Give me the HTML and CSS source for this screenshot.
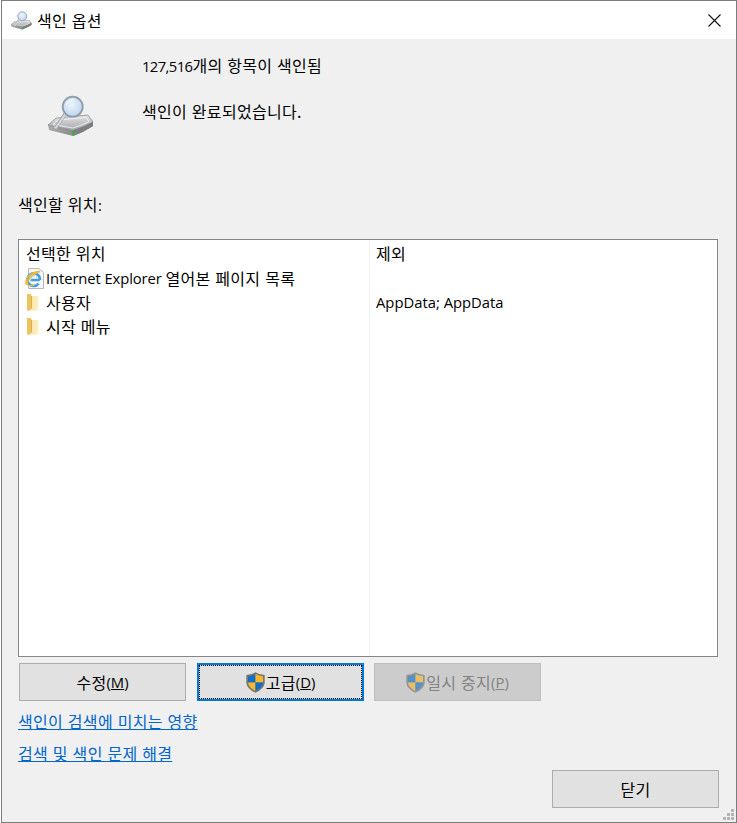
FILE: index.html
```html
<!DOCTYPE html>
<html lang="ko">
<head>
<meta charset="utf-8">
<title>색인 옵션</title>
<link rel="stylesheet" href="styles.css">
</head>
<body>
<svg class="defs" width="0" height="0" aria-hidden="true">
  <defs>
    <linearGradient id="body" x1="0" y1="0" x2="0" y2="1"><stop offset="0" stop-color="#e2e4e6"/><stop offset="1" stop-color="#a2a4a7"/></linearGradient>
    <linearGradient id="side" x1="0" y1="0" x2="1" y2="0"><stop offset="0" stop-color="#a9abad"/><stop offset="1" stop-color="#6f7173"/></linearGradient>
    <radialGradient id="lens" cx=".45" cy=".4" r=".7"><stop offset="0" stop-color="#eef5fc"/><stop offset="1" stop-color="#b4cfec"/></radialGradient>
    <linearGradient id="fold" x1="0" y1="0" x2="1" y2="0"><stop offset="0" stop-color="#f8df94"/><stop offset="1" stop-color="#fdf1c6"/></linearGradient>
    <symbol id="drive" viewBox="0 0 46 42">
      <path d="M0 30 L8 23 L40 20 L45 27 V31 Q36 37 25 41 L1 35Z" fill="url(#side)"/>
      <path d="M0 30 L8 23 L40 20 L45 27 Q36 32 25 35.5Z" fill="url(#body)" stroke="#8a8c8f" stroke-width=".6"/>
      <path d="M25 35.5 Q36 32 45 27 V31 Q36 37 25 41Z" fill="#7d7f82"/>
      <path d="M5 29.5 L10 25 L38 22.5 L41 26.5 Q33 30.5 25 33Z" fill="none" stroke="#f4f5f6" stroke-width=".8"/>
      <rect x="24" y="35.8" width="2" height="4.6" fill="#2ebc2a"/>
      <path d="M8 32 L17 19" stroke="#d6d8da" stroke-width="3.4" stroke-linecap="round"/>
      <path d="M7.2 31.2 L16.2 18.2" stroke="#7f8285" stroke-width=".7" stroke-linecap="round"/>
      <path d="M9.4 33 L18.4 20" stroke="#8f9295" stroke-width=".5" stroke-linecap="round"/>
      <circle cx="24.7" cy="11.7" r="10" fill="url(#lens)" stroke="#8f9caa" stroke-width="1.8"/>
      <path d="M18 10 Q20 5 27 4.5" fill="none" stroke="#fff" stroke-width="1.1" opacity=".85"/>
    </symbol>
    <symbol id="folder" viewBox="0 0 12 18">
      <path d="M0 1 H4 L5 3 H11.5 V17.5 H1 Q0 17.5 0 16.5Z" fill="url(#fold)"/>
      <path d="M0 1 H4 V15 L1.2 17.5 Q0 17.5 0 16.5Z" fill="#ecc55f"/>
      <path d="M4 3 H5 V15 L2 17.5 H1.2 L4 15Z" fill="#d9b04f"/>
    </symbol>
    <symbol id="shield" viewBox="0 0 19 21">
      <path d="M9.5 .3 Q13.5 3 18.7 3 V11 Q18 17 9.5 20.7 Q1 17 .3 11 V3 Q5.5 3 9.5 .3Z" fill="#77776f"/>
      <path d="M9.5 2 V10.5 H2 V4.2 Q6.5 4 9.5 2Z" fill="#0f6fc6"/>
      <path d="M9.5 2 Q12.5 4 17 4.2 V10.5 H9.5Z" fill="#fbb72d"/>
      <path d="M2 10.5 H9.5 V19 Q2.6 16 2 10.5Z" fill="#fbb72d"/>
      <path d="M9.5 10.5 H17 Q16.4 16 9.5 19Z" fill="#0f6fc6"/>
    </symbol>
  </defs>
</svg>
<div class="window">
  <header class="titlebar">
    <svg class="title-icon" width="21" height="19"><use href="#drive"/></svg>
    <span class="title-text ko">색인 옵션</span>
    <svg class="close-x" width="13" height="13" viewBox="0 0 13 13"><path d="M.5 .5 L12.5 12.5 M12.5 .5 L.5 12.5" stroke="#111" stroke-width="1.1" fill="none"/></svg>
  </header>
  <main class="content">
    <section class="status">
      <div class="status-icon"><svg width="46" height="42"><use href="#drive"/></svg></div>
      <div class="status-text">
        <p class="count"><span class="num">127,516</span><span class="ko">개의 항목이 색인됨</span></p>
        <p class="state ko">색인이 완료되었습니다.</p>
      </div>
    </section>
    <p class="list-label"><span class="ko">색인할 위치</span>:</p>
    <div class="listbox">
      <div class="col col-left">
        <div class="col-head"><span class="ko">선택한 위치</span></div>
        <div class="row ie">
          <svg class="ie-icon" width="19" height="21" viewBox="0 0 19 21">
            <path d="M3.5 .5 H14 L18.5 4.5 V20.5 H3.5Z" fill="#f6f6f6" stroke="#b5b8bc"/>
            <path d="M14.8 12 H5.5 M15 12 A6.3 6.3 0 1 0 13.6 15.6" fill="none" stroke="#3f9fe2" stroke-width="2.5"/>
            <path d="M5.5 12 A4.2 4.2 0 0 1 12.5 9" fill="none" stroke="#bfe0f7" stroke-width="1"/>
            <path d="M1 16.5 Q0 9 8 5 Q12 3 15 3.5 Q9 5 4.5 10.5 Q1.5 14 2.5 16.5 Q4 18.5 9 17" fill="none" stroke="#ecb93f" stroke-width="1.4"/>
          </svg>
          <span class="latin">Internet Explorer </span><span class="ko">열어본 페이지 목록</span>
        </div>
        <div class="row"><svg class="fold-icon" width="12" height="18"><use href="#folder"/></svg><span class="ko">사용자</span></div>
        <div class="row"><svg class="fold-icon" width="12" height="18"><use href="#folder"/></svg><span class="ko">시작 메뉴</span></div>
      </div>
      <div class="col col-right">
        <div class="col-head"><span class="ko">제외</span></div>
        <div class="row"></div>
        <div class="row">AppData; AppData</div>
      </div>
    </div>
    <div class="actions">
      <button class="btn" type="button"><span class="ko">수정</span>(<u>M</u>)</button>
      <button class="btn focused" type="button"><svg class="shield" width="19" height="21"><use href="#shield"/></svg><span class="ko">고급</span>(<u>D</u>)</button>
      <button class="btn disabled" type="button"><svg class="shield dim" width="19" height="21"><use href="#shield"/></svg><span class="ko">일시 중지</span>(<u>P</u>)</button>
    </div>
    <a class="link first ko" href="#">색인이 검색에 미치는 영향</a>
    <a class="link ko" href="#">검색 및 색인 문제 해결</a>
    <div class="footer"><button class="btn" type="button"><span class="ko">닫기</span></button></div>
  </main>
  <svg class="grip" width="12" height="12" viewBox="0 0 12 12" fill="#b4b4b4"><rect x="8" y="0" width="3" height="3"/><rect x="4" y="4" width="3" height="3"/><rect x="8" y="4" width="3" height="3"/><rect x="0" y="8" width="3" height="3"/><rect x="4" y="8" width="3" height="3"/><rect x="8" y="8" width="3" height="3"/></svg>
</div>
</body>
</html>
```
FILE: styles.css
```css
* { box-sizing: border-box; }
html, body { margin: 0; padding: 0; background: #fff; }
body {
  width: 737px;
  height: 823px;
  overflow: hidden;
  padding-left: 1px;
  font-family: "Open Sans", "Noto Sans CJK KR", sans-serif;
  font-size: 14.8px;
  color: #000;
}
.ko {
  font-family: "Noto Sans CJK KR", sans-serif;
  font-size: 16px;
  letter-spacing: .3px;
}
.num { letter-spacing: -.6px; }
.latin { letter-spacing: -.1px; white-space: pre; }
.defs { position: absolute; }
.window {
  position: relative;
  width: 736px;
  height: 823px;
  border: 1px solid #7d7d7d;
  display: flex;
  flex-direction: column;
  background: #f0f0f0;
}
.titlebar {
  height: 38px;
  background: #fff;
  display: flex;
  align-items: center;
  padding: 0 15px 0 9px;
  flex: none;
}
.title-icon { flex: none; }
.title-text { margin-left: 5px; flex: 1; line-height: 20px; }
.close-x { flex: none; }
.content {
  flex: 1;
  padding: 0 16px 0 16px;
  display: flex;
  flex-direction: column;
}
.status { display: flex; height: 112px; }
.status-icon { width: 124px; padding: 56px 0 0 30px; flex: none; }
.status-text { padding-top: 14px; }
.status-text p { margin: 0; line-height: 24px; }
.status-text .state { margin-top: 21px; }
.list-label { margin: 41px 0 0; line-height: 24px; height: 47px; }
.listbox {
  width: 700px;
  height: 418px;
  background: #fff;
  border: 1px solid #82878c;
  display: flex;
  flex: none;
}
.col { padding-top: 1px; }
.col-left { width: 351px; padding-left: 7px; border-right: 1px solid #eef1f5; flex: none; }
.col-right { flex: 1; padding-left: 6px; }
.col-head { height: 25px; line-height: 24px; }
.row { height: 24px; line-height: 24px; display: flex; align-items: center; white-space: nowrap; }
.ie { margin-left: -1px; }
.ie-icon { flex: none; margin-right: 2px; }
.fold-icon { flex: none; margin-left: 1px; margin-right: 7px; }
.actions { display: flex; gap: 11px; margin-top: 6px; padding-left: 1px; flex: none; }
.btn {
  width: 167px;
  height: 38px;
  background: #e1e1e1;
  border: 1px solid #adadad;
  font: inherit;
  color: #000;
  display: flex;
  align-items: center;
  justify-content: center;
  padding: 0;
}
.btn svg { flex: none; }
.btn .shield { margin-right: 1px; }
.btn.focused {
  border: 2px solid #0078d7;
  outline: 1px dotted #000;
  outline-offset: -3px;
}
.btn.disabled { background: #cccccc; border-color: #bfbfbf; color: #838383; }
.actions .btn.disabled { margin-left: -1px; }
.dim { opacity: .62; }
.link {
  color: #0066cc;
  text-decoration: underline;
  text-decoration-skip-ink: none;
  align-self: flex-start;
  line-height: 22px;
}
.link.first { margin-top: 9px; }
.link + .link { margin-top: 10px; }
.footer { display: flex; justify-content: flex-end; margin-top: 6px; padding-right: 1px; }
.grip { position: absolute; right: 1px; bottom: 1px; }
```
